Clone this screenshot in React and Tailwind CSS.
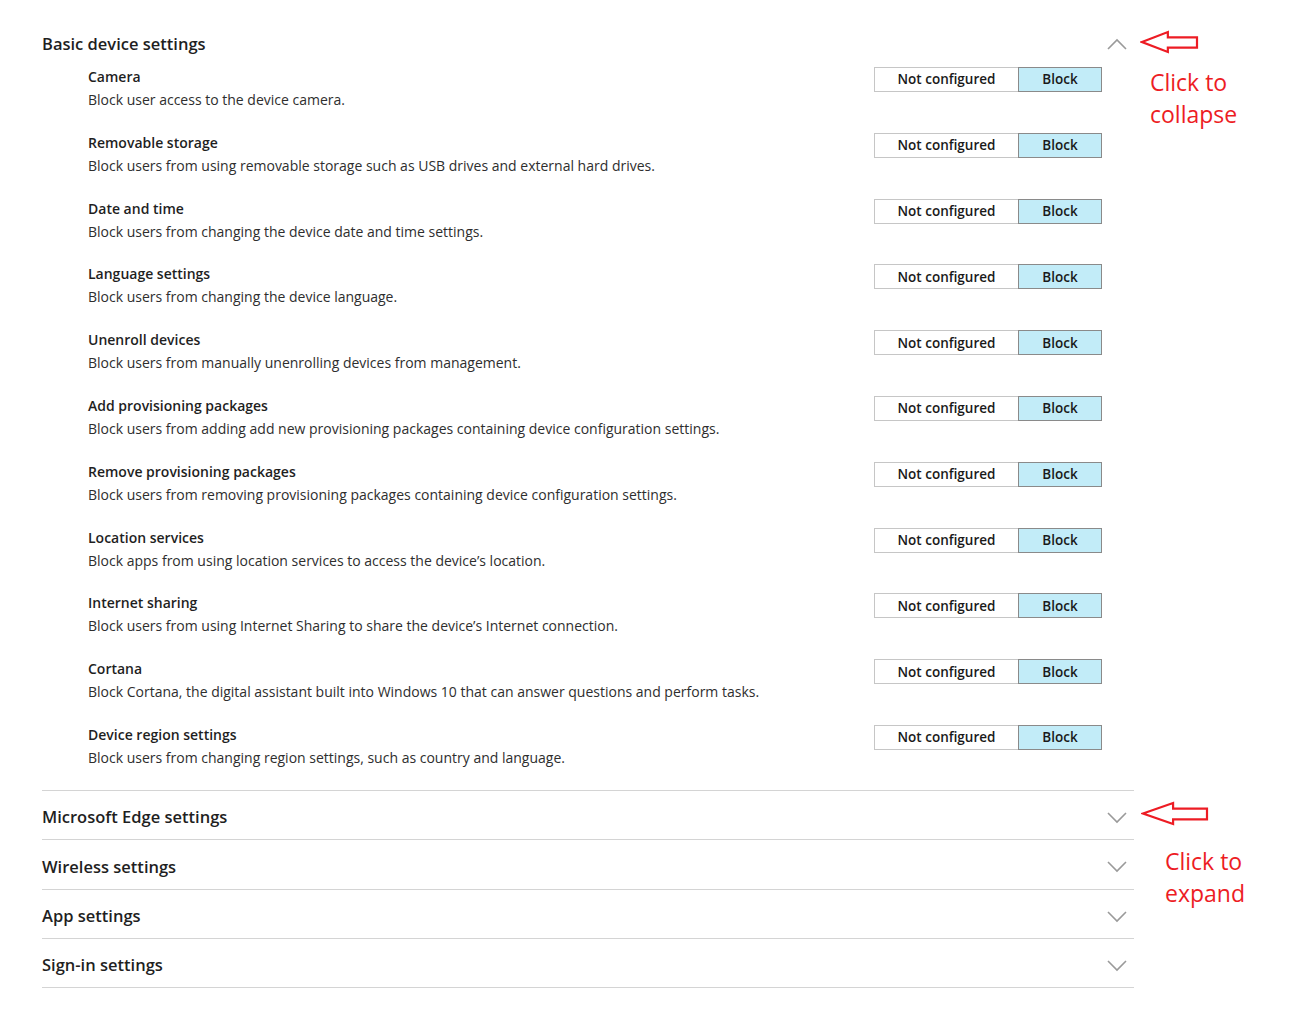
import { useState } from "react";

const items = [
  { title: "Camera", desc: "Block user access to the device camera." },
  { title: "Removable storage", desc: "Block users from using removable storage such as USB drives and external hard drives." },
  { title: "Date and time", desc: "Block users from changing the device date and time settings." },
  { title: "Language settings", desc: "Block users from changing the device language." },
  { title: "Unenroll devices", desc: "Block users from manually unenrolling devices from management." },
  { title: "Add provisioning packages", desc: "Block users from adding add new provisioning packages containing device configuration settings." },
  { title: "Remove provisioning packages", desc: "Block users from removing provisioning packages containing device configuration settings." },
  { title: "Location services", desc: "Block apps from using location services to access the device\u2019s location." },
  { title: "Internet sharing", desc: "Block users from using Internet Sharing to share the device\u2019s Internet connection." },
  { title: "Cortana", desc: "Block Cortana, the digital assistant built into Windows 10 that can answer questions and perform tasks." },
  { title: "Device region settings", desc: "Block users from changing region settings, such as country and language." },
];

const collapsed = ["Microsoft Edge settings", "Wireless settings", "App settings", "Sign-in settings"];

function Chevron({ up }) {
  return (
    <svg width="20" height="12" viewBox="0 0 20 12" className="shrink-0">
      <polyline
        points={up ? "1,11 10,2 19,11" : "1,1 10,10 19,1"}
        fill="none"
        stroke="#9a9a9a"
        strokeWidth="1.6"
      />
    </svg>
  );
}

function Toggle() {
  const [val, setVal] = useState("block");
  return (
    <div className="flex h-[26px] shrink-0 pt-px text-[13.5px] font-semibold text-[#1a1a1a]">
      <button
        onClick={() => setVal("nc")}
        className={`w-[145px] border ${val === "nc" ? "border-[#8a8a8a] bg-[#c2ecf8]" : "border-[#c6c6c6] bg-white"}`}
      >
        Not configured
      </button>
      <button
        onClick={() => setVal("block")}
        className={`-ml-px w-[84px] border ${val === "block" ? "border-[#8a8a8a] bg-[#c2ecf8]" : "border-[#c6c6c6] bg-white"}`}
      >
        Block
      </button>
    </div>
  );
}

function Arrow({ w, h }) {
  return (
    <svg width={w + 4} height={h + 4} viewBox={`-2 -2 ${w + 4} ${h + 4}`}>
      <polygon
        points={`0,${h / 2} ${w * 0.47},0 ${w * 0.47},${h * 0.27} ${w},${h * 0.27} ${w},${h * 0.78} ${w * 0.47},${h * 0.78} ${w * 0.47},${h}`}
        fill="none"
        stroke="#ed1c24"
        strokeWidth="2.2"
      />
    </svg>
  );
}

export default function App() {
  return (
    <div className="relative min-h-[1028px] bg-white font-['Open_Sans',sans-serif] text-[#1f1f1f]">
      <div className="w-[1134px] pl-[42px] pt-[33px]">
        <div className="flex h-[22px] items-center justify-between pr-[7px]">
          <h2 className="text-[16.5px] font-semibold">Basic device settings</h2>
          <Chevron up />
        </div>
        <div className="mt-[11px] pl-[46px] pr-[32px]">
          {items.map((it) => (
            <div key={it.title} className="flex h-[65.8px] items-start justify-between">
              <div className="leading-[23px]">
                <div className="-mt-px text-[14px] font-semibold">{it.title}</div>
                <div className="text-[14px] text-[#2e2e2e]">{it.desc}</div>
              </div>
              <Toggle />
            </div>
          ))}
        </div>
        {collapsed.map((c) => (
          <div
            key={c}
            className="flex h-[49.5px] items-center justify-between border-t border-[#d4d4d4] pr-[7px] pt-[5px] last:border-b"
          >
            <h2 className="text-[16.5px] font-semibold">{c}</h2>
            <Chevron />
          </div>
        ))}
      </div>

      <div className="absolute left-[1140px] top-[30px]">
        <Arrow w={55} h={20} />
      </div>
      <div className="absolute left-[1150px] top-[66px] text-[23px] leading-[32px] text-[#ed1c24]">
        Click to
        <br />
        collapse
      </div>
      <div className="absolute left-[1141px] top-[801px]">
        <Arrow w={64} h={21} />
      </div>
      <div className="absolute left-[1165px] top-[845px] text-[23px] leading-[32px] text-[#ed1c24]">
        Click to
        <br />
        expand
      </div>
    </div>
  );
}
